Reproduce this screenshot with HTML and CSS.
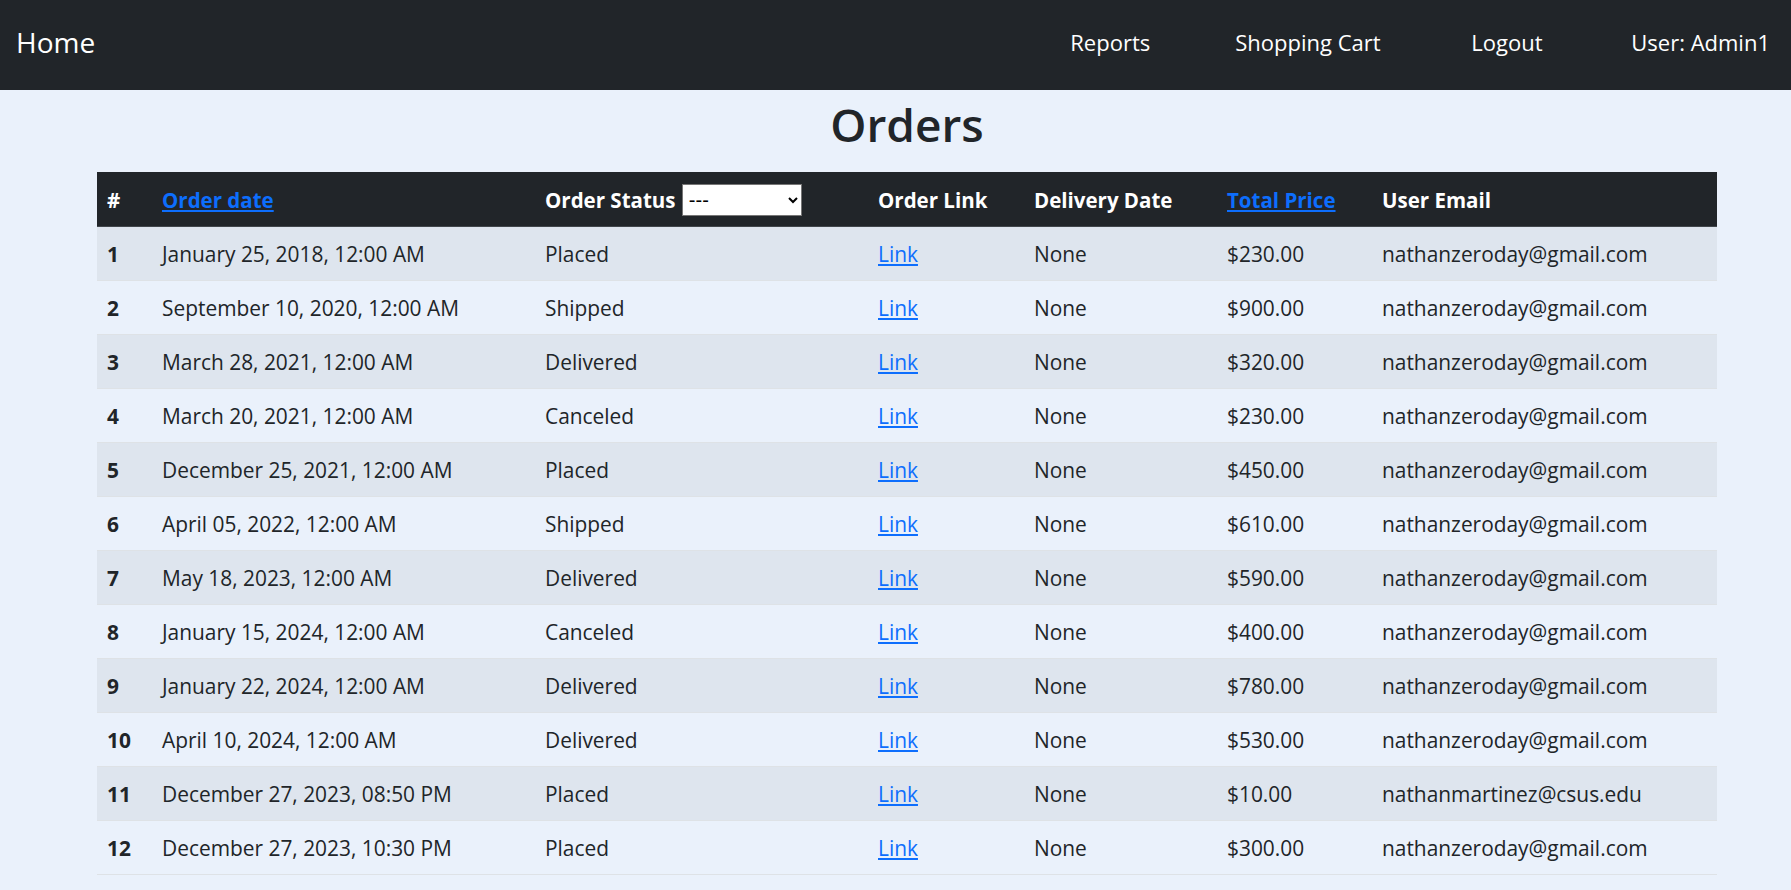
FILE: index.html
```html
<!DOCTYPE html>
<html lang="en">
<head>
<meta charset="utf-8">
<title>Orders</title>
<link rel="stylesheet" href="styles.css">
</head>
<body>
<nav class="navbar">
  <a class="brand" href="#">Home</a>
  <ul class="nav-links">
    <li class="nav-item item-reports"><a href="#">Reports</a></li>
    <li class="nav-item item-cart"><a href="#">Shopping Cart</a></li>
    <li class="nav-item item-logout"><a href="#">Logout</a></li>
    <li class="nav-item item-user"><span>User: Admin1</span></li>
  </ul>
</nav>
<main class="content">
  <h1 class="title">Orders</h1>
  <table class="orders">
    <colgroup>
      <col class="c-num"><col class="c-date"><col class="c-status"><col class="c-link"><col class="c-delivery"><col class="c-price"><col class="c-email">
    </colgroup>
    <thead>
      <tr>
        <th>#</th>
        <th><a href="#">Order date</a></th>
        <th>Order Status <select class="status-select"><option>---</option><option>Placed</option><option>Shipped</option><option>Delivered</option><option>Canceled</option></select></th>
        <th>Order Link</th>
        <th>Delivery Date</th>
        <th><a href="#">Total Price</a></th>
        <th>User Email</th>
      </tr>
    </thead>
    <tbody>
      <tr><th>1</th><td>January 25, 2018, 12:00 AM</td><td>Placed</td><td><a href="#">Link</a></td><td>None</td><td>$230.00</td><td>nathanzeroday@gmail.com</td></tr>
      <tr><th>2</th><td>September 10, 2020, 12:00 AM</td><td>Shipped</td><td><a href="#">Link</a></td><td>None</td><td>$900.00</td><td>nathanzeroday@gmail.com</td></tr>
      <tr><th>3</th><td>March 28, 2021, 12:00 AM</td><td>Delivered</td><td><a href="#">Link</a></td><td>None</td><td>$320.00</td><td>nathanzeroday@gmail.com</td></tr>
      <tr><th>4</th><td>March 20, 2021, 12:00 AM</td><td>Canceled</td><td><a href="#">Link</a></td><td>None</td><td>$230.00</td><td>nathanzeroday@gmail.com</td></tr>
      <tr><th>5</th><td>December 25, 2021, 12:00 AM</td><td>Placed</td><td><a href="#">Link</a></td><td>None</td><td>$450.00</td><td>nathanzeroday@gmail.com</td></tr>
      <tr><th>6</th><td>April 05, 2022, 12:00 AM</td><td>Shipped</td><td><a href="#">Link</a></td><td>None</td><td>$610.00</td><td>nathanzeroday@gmail.com</td></tr>
      <tr><th>7</th><td>May 18, 2023, 12:00 AM</td><td>Delivered</td><td><a href="#">Link</a></td><td>None</td><td>$590.00</td><td>nathanzeroday@gmail.com</td></tr>
      <tr><th>8</th><td>January 15, 2024, 12:00 AM</td><td>Canceled</td><td><a href="#">Link</a></td><td>None</td><td>$400.00</td><td>nathanzeroday@gmail.com</td></tr>
      <tr><th>9</th><td>January 22, 2024, 12:00 AM</td><td>Delivered</td><td><a href="#">Link</a></td><td>None</td><td>$780.00</td><td>nathanzeroday@gmail.com</td></tr>
      <tr><th>10</th><td>April 10, 2024, 12:00 AM</td><td>Delivered</td><td><a href="#">Link</a></td><td>None</td><td>$530.00</td><td>nathanzeroday@gmail.com</td></tr>
      <tr><th>11</th><td>December 27, 2023, 08:50 PM</td><td>Placed</td><td><a href="#">Link</a></td><td>None</td><td>$10.00</td><td>nathanmartinez@csus.edu</td></tr>
      <tr><th>12</th><td>December 27, 2023, 10:30 PM</td><td>Placed</td><td><a href="#">Link</a></td><td>None</td><td>$300.00</td><td>nathanzeroday@gmail.com</td></tr>
    </tbody>
  </table>
</main>
</body>
</html>
```

FILE: styles.css
```css
html {
  background: #eaf1fb;
}

body {
  margin: 0;
  font-family: "Open Sans", "Noto Sans", sans-serif;
  font-size: 20.5px;
  color: #212529;
  background: #eaf1fb;
}

a {
  color: #0d6efd;
  text-decoration: underline;
}

/* Navbar */
.navbar {
  height: 90px;
  box-sizing: border-box;
  background: #212529;
  display: flex;
  align-items: center;
  padding: 0 21px 6px 16px;
}

.brand {
  color: #fff;
  text-decoration: none;
  font-size: 28px;
  line-height: 1;
}

.nav-links {
  list-style: none;
  margin: 0 0 0 auto;
  padding: 0;
  display: flex;
  align-items: center;
}

.nav-item {
  font-size: 22px;
  line-height: 1;
  color: #fff;
}

.nav-item a {
  color: #fff;
  text-decoration: none;
}

.item-reports { width: 165px; }
.item-cart { width: 236px; }
.item-logout { width: 160px; }

/* Main */
.content {
  padding: 0 74px 0 97px;
}

.title {
  margin: 6px 0 20px;
  font-size: 46px;
  line-height: 56px;
  font-weight: 600;
  text-align: center;
  color: #212529;
}

.orders {
  width: 1620px;
  table-layout: fixed;
  border-collapse: separate;
  border-spacing: 0;
}

.c-num { width: 55px; }
.c-date { width: 383px; }
.c-status { width: 333px; }
.c-link { width: 156px; }
.c-delivery { width: 193px; }
.c-price { width: 155px; }
.c-email { width: 345px; }

.orders th,
.orders td {
  padding: 15px 10px 13px;
  line-height: 25px;
  font-size: 20.9px;
  text-align: left;
  vertical-align: middle;
  white-space: nowrap;
  border-bottom: 1px solid #dee2e6;
}

.orders thead th {
  background: #212529;
  color: #fff;
  font-weight: 700;
  font-size: 20.5px;
  line-height: 32px;
  padding: 12px 10px 10px;
  border-bottom: 1px solid #41464b;
}

.orders tbody th {
  font-weight: 700;
}

.orders tbody tr:nth-child(odd) th,
.orders tbody tr:nth-child(odd) td {
  background: #dee5ee;
}

.status-select {
  width: 120px;
  height: 32px;
  margin-left: 1px;
  vertical-align: top;
  font-family: "Liberation Sans", Arial, sans-serif;
  font-size: 20px;
  color: #000;
  background: #fff;
  border: 1px solid #767676;
  border-radius: 0;
  padding: 0 2px;
}
```
